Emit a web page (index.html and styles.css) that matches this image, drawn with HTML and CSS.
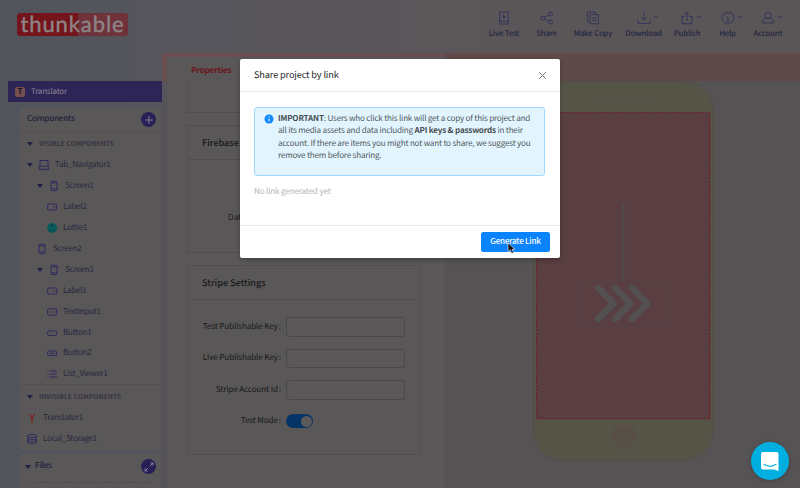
FILE: index.html
```html
<!DOCTYPE html>
<html lang="en">
<head>
<meta charset="utf-8">
<title>Thunkable</title>
<link rel="stylesheet" href="styles.css">
</head>
<body>
<svg class="defs" width="0" height="0">
  <symbol id="phone" viewBox="0 0 14 12"><rect x="4" y="1.2" width="6" height="9.4" rx="1"/><path d="M4 2.8h6M4 8.8h6"/></symbol>
  <symbol id="label" viewBox="0 0 14 12"><rect x="2.7" y="3" width="9" height="6" rx="1"/><path d="M9.2 5v2"/></symbol>
  <symbol id="input" viewBox="0 0 14 12"><rect x="2.7" y="3" width="9" height="6" rx="1"/><path d="M5.4 5v2M9 5v2"/></symbol>
  <symbol id="button" viewBox="0 0 14 12"><rect x="2.7" y="4" width="9" height="4.4" rx="1"/></symbol>
  <symbol id="button2" viewBox="0 0 14 12"><rect x="2.7" y="4" width="9" height="4.4" rx="1"/><path d="M5 6.2h4.5"/></symbol>
  <symbol id="list" viewBox="0 0 14 12"><path d="M2.4 3h1.2M5 3h7M2.4 6h1.2M5 6h7M2.4 9h1.2M5 9h7"/></symbol>
  <symbol id="tabs" viewBox="0 0 14 12"><path d="M3 7V1.5h8V7M2.3 7.3h9.4v3.4H2.3zM4.5 9v.8M7 9v.8M9.5 9v.8"/></symbol>
  <symbol id="down" viewBox="0 0 6 4"><path d="M.8.8 3 3 5.2.8"/></symbol>
</svg>
<div class="app">
  <header class="topbar">
    <div class="logo"><span>thunkable</span></div>
    <nav class="nav">
      <a class="n1"><i><svg width="16" height="16" viewBox="0 0 16 16"><rect x="3.7" y="2" width="8.6" height="12"/><path d="M4 11.3h8"/><path d="M7 4.8 9.8 6.8 7 8.8z" fill="currentColor" stroke="none"/></svg></i>Live Test</a>
      <a class="n2"><i><svg width="16" height="16" viewBox="0 0 16 16"><circle cx="4" cy="8.2" r="2"/><circle cx="11.6" cy="4" r="2"/><circle cx="11.6" cy="12" r="2"/><path d="M5.8 7.2 9.8 5M5.8 9.2l4 2"/></svg></i>Share</a>
      <a class="n3"><i><svg width="16" height="16" viewBox="0 0 16 16"><path d="M4.6 11H2.4V2h8v2.4"/><rect x="5" y="4.6" width="8.4" height="9.2"/><path d="M7 8h4.5M7 10.6h4.5"/></svg></i>Make Copy</a>
      <a class="n4"><i><svg width="16" height="16" viewBox="0 0 16 16"><path d="M2 9.5v4h12v-4M8 2v8M5.3 7.5 8 10.2l2.7-2.7"/></svg><svg class="dd" width="6" height="4"><use href="#down"/></svg></i>Download</a>
      <a class="n5"><i><svg width="16" height="16" viewBox="0 0 16 16"><path d="M5.500 6.500H3v7.200h10V6.500h-2.500M8 11V2.300M5.500 4.600 8 2.100l2.500 2.500"/></svg><svg class="dd" width="6" height="4"><use href="#down"/></svg></i>Publish</a>
      <a class="n6"><i><svg width="16" height="16" viewBox="0 0 16 16"><circle cx="8" cy="8" r="5.900"/><path d="M7 7h1v4M6.600 11h2.900M7.600 4.600h1"/></svg><svg class="dd" width="6" height="4"><use href="#down"/></svg></i>Help</a>
      <a class="n7"><i><svg width="16" height="16" viewBox="0 0 16 16"><circle cx="8" cy="5.500" r="3.200"/><path d="M5.800 8.300C3.500 9 2.600 10.500 2.500 13h11c-.1-2.500-1-4-3.300-4.700"/></svg><svg class="dd" width="6" height="4"><use href="#down"/></svg></i>Account</a>
    </nav>
  </header>
  <main class="workspace">
    <aside class="sidebar">
      <div class="project"><b>T</b><span>Translator</span></div>
      <section class="panel tree">
        <div class="head"><span>Components</span><button class="round"><svg width="14" height="14" viewBox="0 0 14 14"><path d="M7 3.200v7.600M3.200 7h7.600"/></svg></button></div>
        <div class="group"><i class="caret"></i><span>VISIBLE COMPONENTS</span></div>
        <div class="rows">
          <div class="row d0"><i class="caret"></i><svg><use href="#tabs"/></svg><span>Tab_Navigator1</span></div>
          <div class="row d1"><i class="caret"></i><svg><use href="#phone"/></svg><span>Screen1</span></div>
          <div class="row d2"><svg><use href="#label"/></svg><span>Label2</span></div>
          <div class="row d2"><svg viewBox="0 0 14 12"><circle class="lottie" cx="7.200" cy="6" r="5"/><path class="spark" d="M7 2v3M4 9h2M8 8.500h2"/></svg><span>Lottie1</span></div>
          <div class="row s2"><svg><use href="#phone"/></svg><span>Screen2</span></div>
          <div class="row d1"><i class="caret"></i><svg><use href="#phone"/></svg><span>Screen3</span></div>
          <div class="row d2"><svg><use href="#label"/></svg><span>Label1</span></div>
          <div class="row d2"><svg><use href="#input"/></svg><span>TextInput1</span></div>
          <div class="row d2"><svg><use href="#button"/></svg><span>Button1</span></div>
          <div class="row d2"><svg><use href="#button2"/></svg><span>Button2</span></div>
          <div class="row d2"><svg><use href="#list"/></svg><span>List_Viewer1</span></div>
        </div>
        <div class="group invisible"><i class="caret"></i><span>INVISIBLE COMPONENTS</span></div>
        <div class="row inv"><svg class="yandex" viewBox="0 0 14 12"><path d="M4.700 1.500 7 6.500v4.500M9.500 1.500 7 6.500"/></svg><span>Translator1</span></div>
        <div class="row inv"><svg viewBox="0 0 14 12"><ellipse cx="7" cy="2.800" rx="4.200" ry="1.600"/><path d="M2.800 2.800v6.600c0 2 8.400 2 8.400 0V2.800M2.800 5c0 2 8.400 2 8.400 0M2.800 7.200c0 2 8.400 2 8.400 0"/></svg><span>Local_Storage1</span></div>
      </section>
      <section class="panel files">
        <div class="head"><i class="caret"></i><span>Files</span><button class="round"><svg width="14" height="14" viewBox="0 0 14 14"><path d="M8 6l3-3M8.500 3H11v2.500M6 8l-3 3M3 8.500V11h2.500"/></svg></button></div>
        <div class="drop"></div>
      </section>
    </aside>
    <section class="properties">
      <div class="sheet">
        <div class="tab">Properties</div>
        <div class="card stub"></div>
        <div class="card firebase"><h3>Firebase Settings</h3><div class="cardbody"><label>Data</label></div></div>
        <div class="card stripe"><h3>Stripe Settings</h3>
          <div class="cardbody">
            <div class="field"><label>Test Publishable Key<em>:</em></label><div class="box"></div></div>
            <div class="field"><label>Live Publishable Key<em>:</em></label><div class="box"></div></div>
            <div class="field"><label>Stripe Account Id<em>:</em></label><div class="box"></div></div>
            <div class="field"><label>Test Mode<em>:</em></label><div class="switch"></div></div>
          </div>
        </div>
      </div>
    </section>
    <section class="preview">
      <div class="strip"></div>
      <div class="device">
        <div class="speaker"></div>
        <svg class="screen" width="175" height="308" viewBox="0 0 175 308">
          <rect class="fill" x=".75" y=".75" width="173" height="306"/>
          <path class="stem" d="M87.200 92v77"/>
          <rect class="dots" x="44.500" y="169" width="85.500" height="45.500"/>
          <path class="chev" d="M62 176l15.500 15.500L62 207M79 176l15.500 15.500L79 207M96 176l15.500 15.500L96 207"/>
        </svg>
        <div class="home"></div>
      </div>
    </section>
  </main>
</div>
<div class="modal">
  <div class="mhead"><span>Share project by link</span><svg width="9" height="9" viewBox="0 0 9 9"><path d="M1.200 1.200l6.600 6.600M7.800 1.200 1.200 7.800"/></svg></div>
  <div class="mbody">
    <div class="alert">
      <svg width="10" height="10" viewBox="0 0 10 10"><circle cx="5" cy="5" r="4.500"/><path d="M5 4.400v3M5 2.400v1"/></svg>
      <p><span><b>IMPORTANT</b>: Users who click this link will get a copy of this project and</span><br><span>all its media assets and data including <b>API keys &amp; passwords</b> in their</span><br><span>account. If there are items you might not want to share, we suggest you</span><br><span>remove them before sharing.</span></p>
    </div>
    <div class="none">No link generated yet</div>
  </div>
  <div class="mfoot"><button class="primary">Generate Link</button></div>
</div>
<svg class="cursor" width="9" height="13" viewBox="0 0 9 13"><path d="M1 .8v9l2.200-1.900 1.500 3.700 1.800-.8L5 7.300h3z"/></svg>
<div class="chat"><svg width="20" height="21" viewBox="0 0 20 21"><path d="M3 1h13.500Q18.500 1 18.500 3v17l-4-1.500H3Q1 18.500 1 16.500V3Q1 1 3 1z" fill="#fff" stroke="none"/><path d="M4 13.300q6 4 12 0" fill="none" stroke="#00aee0" stroke-width="1.200" stroke-linecap="round"/></svg></div>
</body>
</html>
```
FILE: styles.css
```css
* { box-sizing: border-box; }
body {
  margin: 0; width: 800px; height: 488px; overflow: hidden; position: relative;
  font: 9px/12px "Noto Sans CJK SC", "Noto Sans", sans-serif;
  text-rendering: geometricPrecision;
  background: #595657; color: #171719;
}
svg { display: block; fill: none; stroke: currentColor; flex: none; overflow: visible; }
.defs { position: absolute; }
button { border: 0; padding: 0; font: inherit; }
span, label, a { white-space: nowrap; }
.app { width: 800px; height: 488px; display: flex; flex-direction: column; background: linear-gradient(90deg, #51545c 0, #56555c 170px, #5a5659 420px, #5a5657 800px); }
.topbar { height: 53px; display: flex; justify-content: space-between; flex: none; }
.logo { margin: 13px 0 0 17px; width: 111px; height: 23px; border-radius: 3px; background: linear-gradient(90deg, #74151b 61px, #70323a 61px); color: #8d8486; display: flex; align-items: center; justify-content: center; }
.logo span { font: 400 22px/20px "Lato", sans-serif; letter-spacing: .9px; padding-bottom: 1px; -webkit-text-stroke: .4px #8d8486; }
.nav { display: flex; padding-top: 10px; width: 320px; flex: none; }
.nav a { display: flex; flex-direction: column; align-items: center; color: #262643; font-weight: 500; font-size: 7.8px; letter-spacing: -.18px; line-height: 12px; flex: none; }
.nav i { height: 16px; margin-bottom: 2px; position: relative; color: #30315a; }
.nav svg { stroke-width: .9; }
.dd { position: absolute; left: 17px; top: 5px; }
.n1 { width: 48px; } .n2 { width: 37px; } .n3 { width: 56px; } .n4 { width: 45px; } .n5 { width: 42px; } .n6 { width: 39px; } .n7 { width: 42px; }
.workspace { display: flex; flex: 1; min-height: 0; }
.sidebar { width: 162px; padding: 28px 0 0 8px; display: flex; flex-direction: column; }
.project { height: 21px; flex: none; background: #2e2557; color: #8b8793; display: flex; align-items: center; padding: 0 0 0 7px; gap: 6px; font-size: 8px; letter-spacing: -.2px; }
.project b { width: 10px; height: 10px; border-radius: 2px; background: #74504f; color: #191521; font-size: 8px; line-height: 9px; text-align: center; }
.panel { margin-left: 12px; background: #5a5758; border-radius: 3px; border-right: 1px solid #555258; }
.tree { margin-top: 5px; height: 343px; flex: none; }
.head { height: 24px; padding: 1px 5px 0 7px; display: flex; justify-content: space-between; align-items: center; color: #20203c; font-weight: 500; font-size: 8.1px; letter-spacing: -.2px; }
.head span { padding-bottom: 2px; }
.round { width: 15px; height: 15px; border-radius: 50%; background: #292057; color: #858195; display: grid; place-items: center; }
.caret { border: 3px solid transparent; border-top: 4px solid #202047; border-bottom: 0; flex: none; }
.group { border-top: 1px solid #535055; height: 24px; display: flex; align-items: center; padding-left: 7px; gap: 6px; color: #383542; font-weight: 700; font-size: 6.800px; }
.group span { padding-bottom: 1px; }
.rows { height: 230px; }
.row { height: 20.9px; display: flex; align-items: center; color: #29283f; font-size: 8.1px; letter-spacing: -.28px; gap: 4px; }
.row svg { width: 14px; height: 12px; color: #32295f; }
.d0 { padding-left: 7px; }
.d1 { padding-left: 17px; }
.d2 { padding-left: 25px; }
.s2 { padding-left: 15px; }
.lottie { fill: #075c5b; stroke: none; } .spark { stroke: #122f39; }
.invisible { margin-top: -1px; height: 24px; }
.inv { padding-left: 5px; }
.row .yandex { color: #7b251f; stroke-width: 1.3; }
.files { margin-top: 4px; flex: 1; }
.files .head { justify-content: flex-start; gap: 4px; padding-left: 5px; }
.files .round { margin-left: auto; }
.drop { margin: 4px 10px; border-top: 1px dashed #4e4b50; }
.properties { width: 284px; flex: none; background: linear-gradient(#6a4e4f 28px, #56535a 28px); padding: 4px 0 0 5px; }
.sheet { height: 431px; background: #5a5758; border-right: 1px solid #535052; padding: 7px 25px 0 20px; }
.tab { color: #6b151b; font-weight: 700; font-size: 8.1px; letter-spacing: -.15px; margin-left: 4px; height: 16px; line-height: 13px; }
.card { border: 1px solid #514e51; width: 234px; }
.stub { height: 33px; border-top: 0; }
.firebase { margin-top: 12px; height: 128px; }
.card h3 { font-size: 9.1px; line-height: 33px; font-weight: 500; margin: 0; padding-left: 14px; height: 34px; border-bottom: 1px solid #514e51; }
.firebase label { display: block; margin: 51px 0 0 40px; font-size: 8.2px; }
.firebase .cardbody { padding-top: .1px; }
.stripe { margin-top: 12px; height: 190px; }
.stripe .cardbody { padding: 17px 15px 0 0; }
.field { display: flex; align-items: center; justify-content: flex-end; height: 19.500px; margin-bottom: 12px; gap: 5px; }
.field label { width: 90px; text-align: right; font-size: 8.1px; letter-spacing: -.12px; }
.field em { font-style: normal; margin-left: 1px; }
.box { width: 119px; flex: none; height: 19.500px; border: 1px solid #4a484b; border-radius: 2.500px; }
.switch { width: 27px; flex: none; height: 14px; border-radius: 7px; background: #053466; margin-right: 92px; padding: 1.500px; display: flex; justify-content: flex-end; }
.switch::after { content: ""; width: 11px; height: 11px; border-radius: 50%; background: #5d5a5c; }
.preview { flex: 1; background: #565355; display: flex; flex-direction: column; }
.strip { height: 28px; background: #5e4a49; flex: none; }
.device { width: 181px; height: 380px; margin-left: 87px; background: #555447; border: 1px solid #504e48; border-radius: 30px; display: flex; flex-direction: column; align-items: center; flex: none; }
.speaker { height: 2px; width: 56px; background: #59544a; margin: 17px 0 11px; flex: none; }
.screen .fill { fill: #5a3f42; stroke: #701a26; stroke-width: 1.200; stroke-dasharray: 2.200 1.100; }
.stem { stroke: #524b4d; stroke-width: 2; }
.dots { stroke: #514746; stroke-dasharray: 1 1; }
.screen .chev { stroke: #535052; stroke-width: 6.500px; stroke-linecap: round; stroke-linejoin: round; }
.home { width: 28px; height: 28px; border-radius: 50%; background: linear-gradient(#594c43, #56513f00); margin-top: 5px; }
.modal { position: absolute; left: 240px; top: 59px; width: 320px; height: 199px; background: #fff; border-radius: 2px; box-shadow: 0 2px 5px rgba(0,0,0,.25); }
.mhead { height: 33px; border-bottom: 1px solid #e9e9e9; display: flex; justify-content: space-between; align-items: center; padding: 0 13px 0 14px; color: #252527; font-size: 9.200px; letter-spacing: -.14px; }
.mhead span { padding-bottom: 2px; }
.mhead svg { color: #777; stroke-width: 1; }
.mbody { height: 134px; padding: 15px 15px 0 14px; border-bottom: 1px solid #e9e9e9; }
.alert { height: 69px; border: 1px solid #a0d9fb; border-radius: 3px; background: #e2f5ff; padding: 5px 0 0 9px; display: flex; gap: 4px; color: #50575a; font-size: 8.100px; line-height: 12.300px; letter-spacing: -.2px; }
.alert svg { margin-top: 1px; fill: #1089ff; stroke: none; }
.alert svg path { stroke: #e2f5ff; stroke-width: 1; }
.alert p { margin: 0; }
.alert b { color: #484e51; font-weight: 700; }
.none { margin-top: 10px; color: #b4b4b4; font-size: 8.100px; letter-spacing: -.16px; }
.mfoot { display: flex; justify-content: flex-end; padding: 5.500px 10px; }
.primary { width: 69px; height: 20px; border-radius: 2.500px; background: #0b83fc; color: #fff; font-weight: 500; font-size: 8.100px; letter-spacing: -.25px; line-height: 17px; padding-bottom: 2px; }
.cursor { position: absolute; left: 507px; top: 242px; fill: #111; stroke: #fff; stroke-width: .6; }
.chat { position: absolute; left: 751px; top: 442px; width: 38px; height: 38px; border-radius: 50%; background: #00aee0; display: grid; place-items: center; box-shadow: 0 1px 5px rgba(0,0,0,.2); }
```
